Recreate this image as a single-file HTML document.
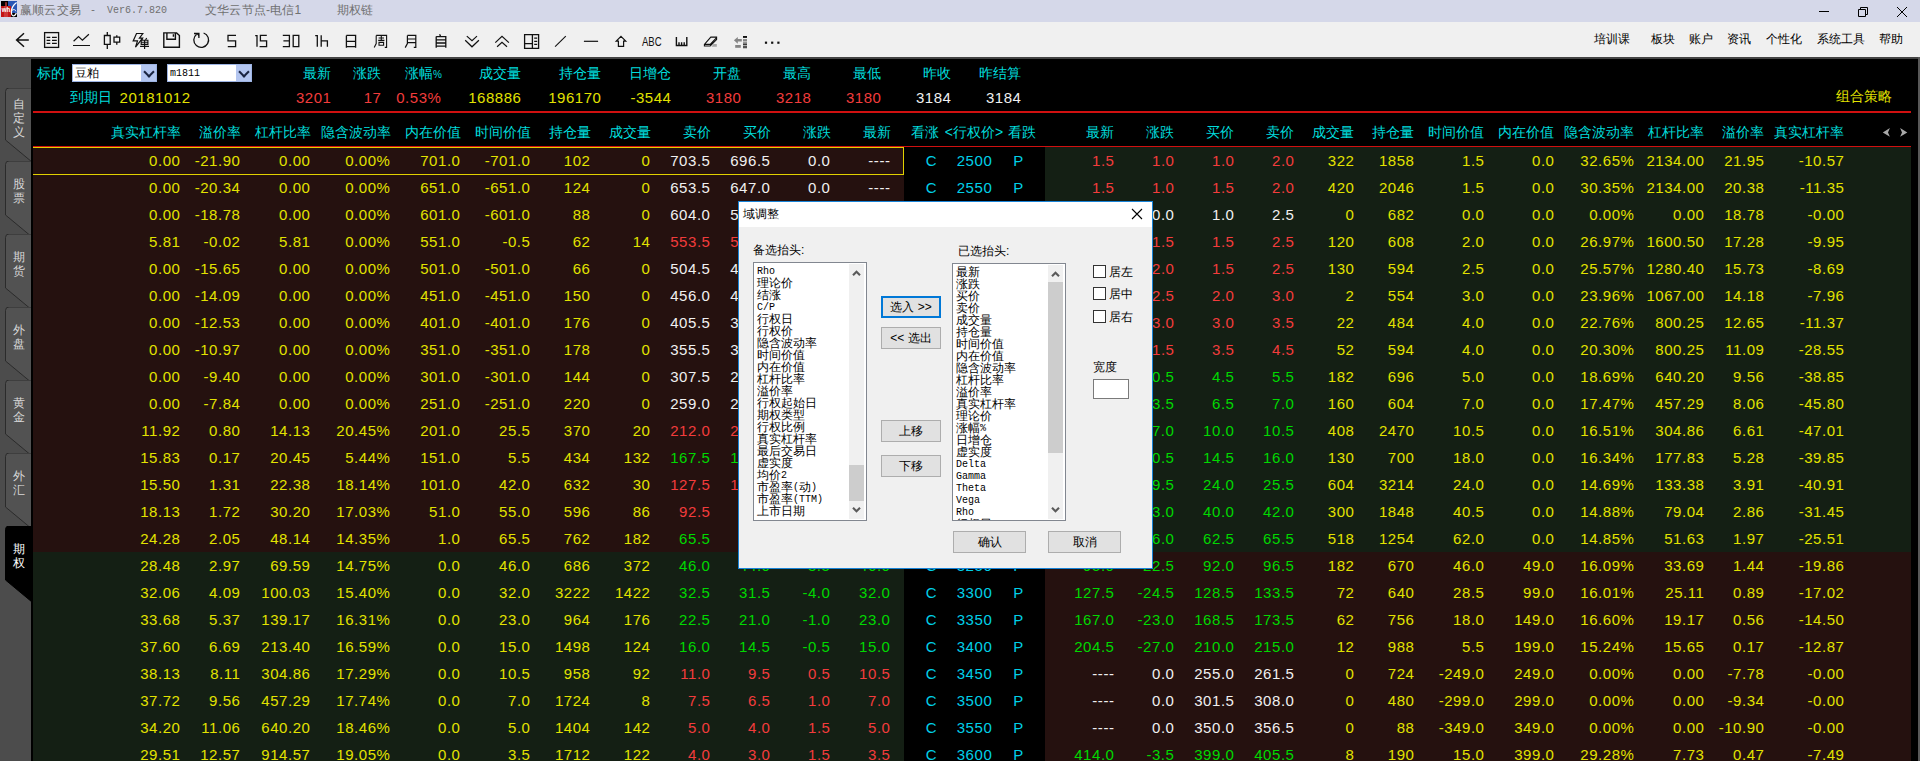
<!DOCTYPE html>
<html lang="zh">
<head>
<meta charset="utf-8">
<title>赢顺云交易</title>
<style>
*{box-sizing:border-box;margin:0;padding:0}
html,body{width:1920px;height:761px;overflow:hidden;background:#000}
body{position:relative;font-family:"Liberation Sans",sans-serif;font-size:12px;color:#000}
#titlebar{position:absolute;left:0;top:0;width:1920px;height:22px;background:#d5d8e9}
#titlebar .t{position:absolute;top:0;height:22px;line-height:20px;font-size:12px;color:#707070;white-space:nowrap;letter-spacing:0.2px}
#toolbar{position:absolute;left:0;top:22px;width:1920px;height:35px;background:#f0f0f0}
#tbline{position:absolute;left:0;top:57px;width:1920px;height:2px;background:#444}
#toolbar .mi{position:absolute;top:9px;height:16px;line-height:16px;font-size:12px;color:#000;white-space:nowrap}
#toolbar svg.ic{position:absolute;top:8px;width:24px;height:22px;overflow:visible}
#sidebar{position:absolute;left:0;top:59px;width:31px;height:702px;background:#4c4c4c;overflow:hidden}
#sidebar .tab{position:absolute;left:0}
#sidebar .tabt{position:absolute;left:6px;width:25px;display:flex;align-items:center;justify-content:center;text-align:center;font-size:12px;line-height:14px}
#main{position:absolute;left:0;top:0;width:1920px;height:761px;overflow:hidden}
.il,.iv,.h,.c{position:absolute;white-space:nowrap;text-align:right;overflow:visible}
.il{top:63px;height:20px;line-height:20px;font-size:14px;color:#00dcdc}
.iv{top:88px;height:20px;line-height:20px;font-size:15px;letter-spacing:0.55px;margin-left:0.5px}
.h{top:122px;height:20px;line-height:20px;font-size:14px;color:#00dcdc}
.il small{font-size:10px;letter-spacing:-1px}
.hc{text-align:center}
.row{position:absolute;left:0;width:1920px;height:27px}
.bg{position:absolute;top:0;height:27px}
.dr{background:#25110f}
.dg{background:#141f14}
.c{top:0;height:27px;line-height:27.7px;font-size:15px;letter-spacing:0.55px;margin-left:0.5px}
.c.m{text-align:center;color:#00d0e8}
.y{color:#e2e200}.r{color:#f23c3c}.g{color:#00d800}.w{color:#f0f0f0}
.hl{position:absolute;height:2px;background:#d01010}
#selbox{position:absolute;left:33px;top:147px;width:871px;height:28px;border:1px solid #e0d000;border-width:1px 1px 1px 0}
select,input{font-family:"Liberation Sans",sans-serif}
.combo{position:absolute;top:64px;width:85px;height:18px;background:#fff;border:1px solid #9db4e4;font-size:12px;line-height:16px;padding-left:2px;color:#000}
.combo i{position:absolute;right:0;top:0;width:15px;height:16px;background:#b4c6f0}
.combo i:after{content:"";position:absolute;left:4px;top:2.5px;width:6px;height:6px;border:solid #1a2440;border-width:0 2px 2px 0;transform:rotate(45deg)}
/* dialog */
#dlg{position:absolute;left:738px;top:201px;width:415px;height:368px;background:#f0f0f0;border:1px solid #1883d7}
#dlg .tt{position:absolute;left:0;top:0;width:413px;height:25px;background:#fff}
#dlg .tt span{position:absolute;left:4px;top:4px;font-size:12px;line-height:16px}
#dlg .lbl{position:absolute;font-size:12px;line-height:14px;white-space:nowrap}
#dlg .lb{position:absolute;background:#fff;border:1px solid #828790;overflow:hidden}
#dlg .lb .it{position:absolute;left:3px;top:2px;font-size:12px;line-height:12px;white-space:nowrap}
#dlg .it div{height:12px;line-height:12px;overflow:visible}
#dlg tt{font-family:'Liberation Mono',monospace;font-size:10px;line-height:10px;display:inline-block;height:10px;vertical-align:top;margin-top:2px}
#dlg .sb{position:absolute;right:2px;top:1px;width:15px;bottom:1px;background:#f0f0f0}
#dlg .sb b{position:absolute;left:0;width:15px;background:#cdcdcd}
#dlg .sb svg{position:absolute;left:3px;width:9px;height:6px}
#dlg .btn{position:absolute;height:22px;background:#e1e1e1;border:1px solid #adadad;font-size:12px;line-height:20px;text-align:center;white-space:nowrap}
#dlg .btn.def{border:2px solid #0078d7;line-height:18px}
#dlg .cb{position:absolute;width:13px;height:13px;background:#fff;border:1px solid #333}
</style>
</head>
<body>
<div id="titlebar">
<svg style="position:absolute;left:1px;top:1px" width="16" height="16" viewBox="0 0 16 16"><rect width="16" height="16" fill="#2856b4"/><rect x="0" y="0" width="7" height="5" fill="#000"/><rect x="4" y="1.2" width="2" height="3.8" fill="#8c2a2a"/><rect x="0" y="5" width="10" height="11" fill="#c41414"/><rect x="3" y="5" width="4" height="11" fill="#cc3838"/><rect x="10" y="12" width="6" height="4" fill="#000"/><path d="M15.6 1.4 C12.6 3.6 10.6 6.8 10.4 10.4 C10.3 13 10.9 14.6 12.2 14.8 C13.6 15 15 13.4 15.2 11.8" stroke="#fff" stroke-width="1.3" fill="none"/><path d="M11 9.4 C12.2 8 14.6 8.4 15 10.4" stroke="#fff" stroke-width="0.9" fill="none"/><text x="0.8" y="10.6" font-family="Liberation Sans" font-weight="bold" font-size="7.6" fill="#fff" textLength="8.6" lengthAdjust="spacingAndGlyphs">wh</text></svg>
<span class="t" style="left:20px">赢顺云交易</span><span class="t" style="left:90px;top:1px;font-family:'Liberation Mono',monospace;font-size:10px;letter-spacing:0">-</span><span class="t" style="left:107px;top:1px;font-family:'Liberation Mono',monospace;font-size:10px;letter-spacing:0">Ver6.7.820</span>
<span class="t" style="left:205px">文华云节点-电信1</span>
<span class="t" style="left:337px">期权链</span>
<svg style="position:absolute;left:1810px;top:0" width="110" height="22" viewBox="0 0 110 22"><g stroke="#000" stroke-width="1" fill="none"><path d="M9 11.5 H19"/><path d="M48.5 9.5 H55.5 V16.5 H48.5 Z M50.5 9.5 V7.5 H57.5 V14.5 H55.5"/><path d="M87 7 L97 17 M97 7 L87 17"/></g></svg>
</div>
<div id="toolbar">
<svg style="position:absolute;left:0;top:0" width="800" height="35" viewBox="0 22 800 35">
<g fill="none" stroke="#111" stroke-width="1.3" stroke-linecap="butt" stroke-linejoin="miter">
<!-- back -->
<path d="M24 33.2 L16.6 40 L24 46.8 M16.8 40 H28.8" stroke-width="1.5"/>
<!-- list -->
<rect x="44.6" y="32.6" width="14" height="14.8"/>
<path d="M46.6 37.3 H50.3 M52 37.3 H56.8 M46.6 40.3 H50.3 M52 40.3 H56.8 M46.6 43.3 H50.3 M52 43.3 H56.8" stroke-width="1.2"/>
<!-- line chart -->
<path d="M73.6 41.3 L78.5 36.6 L82.4 40.2 L88.9 34.2 M73 45.5 H90" stroke-width="1.2"/>
<!-- candles -->
<path d="M107.3 32 V35.5 M107.3 44.4 V49 M104.4 35.5 H110.2 V44.4 H104.4 Z M116.8 35.3 V37.2 M116.8 42.2 V44.8 M114 37.2 H119.7 V42.2 H114 Z"/>
<!-- flash + dan -->
<path d="M136.5 33.5 H142.8 L139.4 38.2 H142.6 L135.5 47.2 L137.5 40.9 H133.2 Z" stroke-width="1.2"/>
<path d="M141.6 38.6 L142.5 40 M146.7 38 L145.6 39.8 M141.2 40.2 H147.9 V44.4 H141.2 Z M141.2 42.2 H147.9 M144.6 40.2 V49 M140.1 46.4 H149" stroke-width="1.15"/>
<!-- floppy -->
<path d="M163.8 32.9 H176.6 L179.4 35.6 V47.2 H163.8 Z M166.9 32.9 V39.2 H175.4 V32.9 M173.4 34.2 V36.8" stroke-width="1.4"/>
<!-- refresh -->
<path d="M203.6 33 A7.4 7.4 0 1 1 196.6 34.2" stroke-width="1.3"/>
<path d="M194 33.5 H198.9 V38" stroke-width="1.3"/>
<path d="M196.2 33.5 H199 V36.4 Z" fill="#111" stroke="none"/>
<!-- 5 -->
<path d="M236 35.4 H228 V40.8 H235.6 V46.6 H227.8"/>
<!-- 15 -->
<path d="M255.2 35.6 H257 V46.8 M266.8 35.4 H260.4 V40.8 H266.6 V46.6 H259.6"/>
<!-- 30 -->
<path d="M282.8 35.4 H289.4 V46.6 H282.8 M283.4 40.8 H289.4 M293.2 35.4 H298.8 V46.6 H293.2 Z"/>
<!-- 1h -->
<path d="M315.2 35.6 H317.3 V46.8 M321.2 35.2 V46.8 M321.2 40.8 H327.4 V46.8"/>
<!-- ri -->
<path d="M346.4 35.4 H355.6 V47.8 M346.4 35.4 V47.8 M346.4 41.3 H355.6 M346.4 46.6 H355.6"/>
<!-- zhou -->
<path d="M376.2 35.4 H386.6 V47.4 H384.8 M376.2 35.4 V43.6 L374.2 47.6 M378.6 38 H384 M381.3 36 V40.4 M378.2 40.4 H384.4 M379 42.4 H383.6 V45.2 H379 Z" stroke-width="1.1"/>
<!-- yue -->
<path d="M407.4 35.4 H415.8 V47.4 H413.8 M407.4 35.4 V43.6 L405.2 47.6 M407.4 39 H415.8 M407.4 42.6 H415.8" stroke-width="1.2"/>
<!-- zi -->
<path d="M439.6 34.2 L440.6 36.4 M436.2 36.6 H445.8 V47.8 M436.2 36.6 V47.8 M436.2 39.8 H445.8 M436.2 43 H445.8 M436.2 46.2 H445.8"/>
<!-- chevrons down -->
<path d="M466.8 36.1 L472 40.6 L477 36.1 M465.2 40.2 L472 46.8 L478.9 40.2" stroke-width="1.2"/>
<!-- chevrons up -->
<path d="M495.3 42.6 L502 36.3 L508.9 42.6 M497.1 46.8 L502 42.4 L507 46.8" stroke-width="1.2"/>
<!-- layout -->
<path d="M524.6 34.6 H538.6 V48.4 H524.6 Z M532.4 34.6 V48.4 M524.6 43.6 H532.4 M534.2 38.2 H537.2 M534.2 41.3 H537.2 M534.2 44.4 H537.2"/>
<!-- diag -->
<path d="M555.1 46.6 L565.8 36.1" stroke-width="1.1"/>
<!-- hline -->
<path d="M583.9 41.3 H598.1" stroke-width="1.2"/>
<!-- up arrow -->
<path d="M621 36.3 L625.8 41.2 H623.6 V46.4 H618.4 V41.2 H616.2 Z" stroke-width="1.2"/>
<!-- ruler -->
<path d="M676.4 36.9 V45.5 H686.8 V36.9 M679 42.2 V45.5 M681.6 42.2 V45.5 M684.2 42.2 V45.5" stroke-width="1.4"/>
<!-- eraser -->
<path d="M710.8 37.1 H716.6 V39.6 L710.2 46 H704.4 V44.4 Z M704.4 44.4 H710.2 L716.6 37.6" stroke-width="1.1"/>
</g>
<path d="M711.5 46.8 L713.5 44 H716.8 V46.8 Z" fill="#a8a8a8"/>
<text x="642" y="45.9" font-family="Liberation Sans" font-size="12" fill="#111" textLength="19.6" lengthAdjust="spacingAndGlyphs">ABC</text>
<!-- indent -->
<g fill="#858585"><path d="M733.9 40.3 L737.8 36.9 V39 H741.8 V41.6 H737.8 V43.7 Z"/><rect x="735.2" y="45" width="5.6" height="2.8"/><rect x="743" y="39.1" width="4" height="2.4"/></g>
<g fill="#111"><rect x="743" y="36" width="4" height="1.9"/><rect x="743" y="42.6" width="4" height="0.9"/><rect x="743" y="44.2" width="4" height="0.9"/><rect x="743" y="45.8" width="4" height="0.9"/><rect x="743" y="47.3" width="4" height="0.9"/>
<rect x="764.9" y="41.6" width="2.2" height="2.2"/><rect x="771.1" y="41.6" width="2.2" height="2.2"/><rect x="777.3" y="41.6" width="2.2" height="2.2"/></g>
</svg>

<span class="mi" style="left:1594px">培训课</span>
<span class="mi" style="left:1651px">板块</span>
<span class="mi" style="left:1689px">账户</span>
<span class="mi" style="left:1727px">资讯</span>
<span class="mi" style="left:1766px">个性化</span>
<span class="mi" style="left:1817px">系统工具</span>
<span class="mi" style="left:1879px">帮助</span>
</div>
<div id="tbline"></div>
<div id="sidebar">
<svg class="tab" style="top:29px" width="31" height="75" viewBox="0 0 31 75"><path d="M32 0 H9 Q5.5 0 5.5 3.5 V52 L32 74 Z" fill="#525252" stroke="#2b2b2b" stroke-width="1"/></svg>
<div class="tabt" style="top:34px;height:50px;color:#d8d8d8"><span>自<br>定<br>义</span></div>
<svg class="tab" style="top:102px" width="31" height="77" viewBox="0 0 31 77"><path d="M32 0 H9 Q5.5 0 5.5 3.5 V54 L32 76 Z" fill="#525252" stroke="#2b2b2b" stroke-width="1"/></svg>
<div class="tabt" style="top:107px;height:50px;color:#d8d8d8"><span>股<br>票</span></div>
<svg class="tab" style="top:175px" width="31" height="77" viewBox="0 0 31 77"><path d="M32 0 H9 Q5.5 0 5.5 3.5 V54 L32 76 Z" fill="#525252" stroke="#2b2b2b" stroke-width="1"/></svg>
<div class="tabt" style="top:180px;height:50px;color:#d8d8d8"><span>期<br>货</span></div>
<svg class="tab" style="top:248px" width="31" height="77" viewBox="0 0 31 77"><path d="M32 0 H9 Q5.5 0 5.5 3.5 V54 L32 76 Z" fill="#525252" stroke="#2b2b2b" stroke-width="1"/></svg>
<div class="tabt" style="top:253px;height:50px;color:#d8d8d8"><span>外<br>盘</span></div>
<svg class="tab" style="top:321px" width="31" height="77" viewBox="0 0 31 77"><path d="M32 0 H9 Q5.5 0 5.5 3.5 V54 L32 76 Z" fill="#525252" stroke="#2b2b2b" stroke-width="1"/></svg>
<div class="tabt" style="top:326px;height:50px;color:#d8d8d8"><span>黄<br>金</span></div>
<svg class="tab" style="top:394px" width="31" height="77" viewBox="0 0 31 77"><path d="M32 0 H9 Q5.5 0 5.5 3.5 V54 L32 76 Z" fill="#525252" stroke="#2b2b2b" stroke-width="1"/></svg>
<div class="tabt" style="top:399px;height:50px;color:#d8d8d8"><span>外<br>汇</span></div>
<svg class="tab" style="top:467px" width="31" height="77" viewBox="0 0 31 77"><path d="M32 0 H9 Q5.5 0 5.5 3.5 V54 L32 76 Z" fill="#000" stroke="#000" stroke-width="1"/></svg>
<div class="tabt" style="top:472px;height:50px;color:#fff"><span>期<br>权</span></div>
</div>
<div id="main">
<span class="il" style="left:37px;width:28px;text-align:left">标的</span>
<div class="combo" style="left:72px">豆粕<i></i></div>
<div class="combo" style="left:167px;font-family:'Liberation Mono',monospace;font-size:10px;line-height:17px">m1811<i></i></div>
<span class="il" style="left:70px;top:87px;width:42px;text-align:left">到期日</span>
<span class="iv y" style="left:119px;width:72px;text-align:left;letter-spacing:0.55px">20181012</span>
<span class="il" style="left:231px;width:100px">最新</span>
<span class="il" style="left:281px;width:100px">涨跌</span>
<span class="il" style="left:341px;width:100px">涨幅<small>%</small></span>
<span class="il" style="left:421px;width:100px">成交量</span>
<span class="il" style="left:501px;width:100px">持仓量</span>
<span class="il" style="left:571px;width:100px">日增仓</span>
<span class="il" style="left:641px;width:100px">开盘</span>
<span class="il" style="left:711px;width:100px">最高</span>
<span class="il" style="left:781px;width:100px">最低</span>
<span class="il" style="left:851px;width:100px">昨收</span>
<span class="il" style="left:921px;width:100px">昨结算</span>
<span class="iv r" style="left:231px;width:100px">3201</span>
<span class="iv r" style="left:281px;width:100px">17</span>
<span class="iv r" style="left:341px;width:100px">0.53%</span>
<span class="iv y" style="left:421px;width:100px">168886</span>
<span class="iv y" style="left:501px;width:100px">196170</span>
<span class="iv y" style="left:571px;width:100px">-3544</span>
<span class="iv r" style="left:641px;width:100px">3180</span>
<span class="iv r" style="left:711px;width:100px">3218</span>
<span class="iv r" style="left:781px;width:100px">3180</span>
<span class="iv w" style="left:851px;width:100px">3184</span>
<span class="iv w" style="left:921px;width:100px">3184</span>
<span class="il y" style="left:1836px;top:86px;width:56px;color:#e2e200;text-align:left">组合策略</span>
<div class="hl" style="left:33px;top:111px;width:1878px"></div>
<span class="h" style="left:81px;width:100px">真实杠杆率</span>
<span class="h" style="left:141px;width:100px">溢价率</span>
<span class="h" style="left:211px;width:100px">杠杆比率</span>
<span class="h" style="left:291px;width:100px">隐含波动率</span>
<span class="h" style="left:361px;width:100px">内在价值</span>
<span class="h" style="left:431px;width:100px">时间价值</span>
<span class="h" style="left:491px;width:100px">持仓量</span>
<span class="h" style="left:551px;width:100px">成交量</span>
<span class="h" style="left:611px;width:100px">卖价</span>
<span class="h" style="left:671px;width:100px">买价</span>
<span class="h" style="left:731px;width:100px">涨跌</span>
<span class="h" style="left:791px;width:100px">最新</span>
<span class="h" style="left:1013.5px;width:100px">最新</span>
<span class="h" style="left:1073.5px;width:100px">涨跌</span>
<span class="h" style="left:1133.5px;width:100px">买价</span>
<span class="h" style="left:1193.5px;width:100px">卖价</span>
<span class="h" style="left:1253.5px;width:100px">成交量</span>
<span class="h" style="left:1313.5px;width:100px">持仓量</span>
<span class="h" style="left:1383.5px;width:100px">时间价值</span>
<span class="h" style="left:1453.5px;width:100px">内在价值</span>
<span class="h" style="left:1533.5px;width:100px">隐含波动率</span>
<span class="h" style="left:1603.5px;width:100px">杠杆比率</span>
<span class="h" style="left:1663.5px;width:100px">溢价率</span>
<span class="h" style="left:1743.5px;width:100px">真实杠杆率</span>
<span class="h hc" style="left:900px;width:50px">看涨</span>
<span class="h hc" style="left:941px;width:66px">&lt;行权价&gt;</span>
<span class="h hc" style="left:997px;width:50px">看跌</span>
<svg style="position:absolute;left:1880px;top:126px" width="30" height="13" viewBox="1880 126 30 13"><path d="M1882.8 132.4 L1889.9 128 L1888 132.4 L1889.9 136.8 Z M1907.3 132.4 L1900.1 128 L1902 132.4 L1900.1 136.8 Z" fill="#a8a8a8"/></svg>
<div class="hl" style="left:33px;top:146px;width:1878px;height:1px"></div>
<div class="row" style="top:147px"><div class="bg dr" style="left:33px;width:871px"></div><div class="bg dg" style="left:1045px;width:866px"></div><span class="c y" style="left:90px;width:90px">0.00</span><span class="c y" style="left:150px;width:90px">-21.90</span><span class="c y" style="left:220px;width:90px">0.00</span><span class="c y" style="left:300px;width:90px">0.00%</span><span class="c y" style="left:370px;width:90px">701.0</span><span class="c y" style="left:440px;width:90px">-701.0</span><span class="c y" style="left:500px;width:90px">102</span><span class="c y" style="left:560px;width:90px">0</span><span class="c w" style="left:620px;width:90px">703.5</span><span class="c w" style="left:680px;width:90px">696.5</span><span class="c w" style="left:740px;width:90px">0.0</span><span class="c w" style="left:800px;width:90px">----</span><span class="c m" style="left:911px;width:40px">C</span><span class="c m" style="left:944px;width:60px">2500</span><span class="c m" style="left:998px;width:40px">P</span><span class="c r" style="left:1024px;width:90px">1.5</span><span class="c r" style="left:1084px;width:90px">1.0</span><span class="c r" style="left:1144px;width:90px">1.0</span><span class="c r" style="left:1204px;width:90px">2.0</span><span class="c y" style="left:1264px;width:90px">322</span><span class="c y" style="left:1324px;width:90px">1858</span><span class="c y" style="left:1394px;width:90px">1.5</span><span class="c y" style="left:1464px;width:90px">0.0</span><span class="c y" style="left:1544px;width:90px">32.65%</span><span class="c y" style="left:1614px;width:90px">2134.00</span><span class="c y" style="left:1674px;width:90px">21.95</span><span class="c y" style="left:1754px;width:90px">-10.57</span></div>
<div class="row" style="top:174px"><div class="bg dr" style="left:33px;width:871px"></div><div class="bg dg" style="left:1045px;width:866px"></div><span class="c y" style="left:90px;width:90px">0.00</span><span class="c y" style="left:150px;width:90px">-20.34</span><span class="c y" style="left:220px;width:90px">0.00</span><span class="c y" style="left:300px;width:90px">0.00%</span><span class="c y" style="left:370px;width:90px">651.0</span><span class="c y" style="left:440px;width:90px">-651.0</span><span class="c y" style="left:500px;width:90px">124</span><span class="c y" style="left:560px;width:90px">0</span><span class="c w" style="left:620px;width:90px">653.5</span><span class="c w" style="left:680px;width:90px">647.0</span><span class="c w" style="left:740px;width:90px">0.0</span><span class="c w" style="left:800px;width:90px">----</span><span class="c m" style="left:911px;width:40px">C</span><span class="c m" style="left:944px;width:60px">2550</span><span class="c m" style="left:998px;width:40px">P</span><span class="c r" style="left:1024px;width:90px">1.5</span><span class="c r" style="left:1084px;width:90px">1.0</span><span class="c r" style="left:1144px;width:90px">1.5</span><span class="c r" style="left:1204px;width:90px">2.0</span><span class="c y" style="left:1264px;width:90px">420</span><span class="c y" style="left:1324px;width:90px">2046</span><span class="c y" style="left:1394px;width:90px">1.5</span><span class="c y" style="left:1464px;width:90px">0.0</span><span class="c y" style="left:1544px;width:90px">30.35%</span><span class="c y" style="left:1614px;width:90px">2134.00</span><span class="c y" style="left:1674px;width:90px">20.38</span><span class="c y" style="left:1754px;width:90px">-11.35</span></div>
<div class="row" style="top:201px"><div class="bg dr" style="left:33px;width:871px"></div><div class="bg dg" style="left:1045px;width:866px"></div><span class="c y" style="left:90px;width:90px">0.00</span><span class="c y" style="left:150px;width:90px">-18.78</span><span class="c y" style="left:220px;width:90px">0.00</span><span class="c y" style="left:300px;width:90px">0.00%</span><span class="c y" style="left:370px;width:90px">601.0</span><span class="c y" style="left:440px;width:90px">-601.0</span><span class="c y" style="left:500px;width:90px">88</span><span class="c y" style="left:560px;width:90px">0</span><span class="c w" style="left:620px;width:90px">604.0</span><span class="c w" style="left:680px;width:90px">597.5</span><span class="c w" style="left:740px;width:90px">0.0</span><span class="c w" style="left:800px;width:90px">----</span><span class="c m" style="left:911px;width:40px">C</span><span class="c m" style="left:944px;width:60px">2600</span><span class="c m" style="left:998px;width:40px">P</span><span class="c w" style="left:1024px;width:90px">----</span><span class="c w" style="left:1084px;width:90px">0.0</span><span class="c w" style="left:1144px;width:90px">1.0</span><span class="c w" style="left:1204px;width:90px">2.5</span><span class="c y" style="left:1264px;width:90px">0</span><span class="c y" style="left:1324px;width:90px">682</span><span class="c y" style="left:1394px;width:90px">0.0</span><span class="c y" style="left:1464px;width:90px">0.0</span><span class="c y" style="left:1544px;width:90px">0.00%</span><span class="c y" style="left:1614px;width:90px">0.00</span><span class="c y" style="left:1674px;width:90px">18.78</span><span class="c y" style="left:1754px;width:90px">-0.00</span></div>
<div class="row" style="top:228px"><div class="bg dr" style="left:33px;width:871px"></div><div class="bg dg" style="left:1045px;width:866px"></div><span class="c y" style="left:90px;width:90px">5.81</span><span class="c y" style="left:150px;width:90px">-0.02</span><span class="c y" style="left:220px;width:90px">5.81</span><span class="c y" style="left:300px;width:90px">0.00%</span><span class="c y" style="left:370px;width:90px">551.0</span><span class="c y" style="left:440px;width:90px">-0.5</span><span class="c y" style="left:500px;width:90px">62</span><span class="c y" style="left:560px;width:90px">14</span><span class="c r" style="left:620px;width:90px">553.5</span><span class="c r" style="left:680px;width:90px">547.0</span><span class="c r" style="left:740px;width:90px">2.5</span><span class="c r" style="left:800px;width:90px">550.5</span><span class="c m" style="left:911px;width:40px">C</span><span class="c m" style="left:944px;width:60px">2650</span><span class="c m" style="left:998px;width:40px">P</span><span class="c r" style="left:1024px;width:90px">2.0</span><span class="c r" style="left:1084px;width:90px">1.5</span><span class="c r" style="left:1144px;width:90px">1.5</span><span class="c r" style="left:1204px;width:90px">2.5</span><span class="c y" style="left:1264px;width:90px">120</span><span class="c y" style="left:1324px;width:90px">608</span><span class="c y" style="left:1394px;width:90px">2.0</span><span class="c y" style="left:1464px;width:90px">0.0</span><span class="c y" style="left:1544px;width:90px">26.97%</span><span class="c y" style="left:1614px;width:90px">1600.50</span><span class="c y" style="left:1674px;width:90px">17.28</span><span class="c y" style="left:1754px;width:90px">-9.95</span></div>
<div class="row" style="top:255px"><div class="bg dr" style="left:33px;width:871px"></div><div class="bg dg" style="left:1045px;width:866px"></div><span class="c y" style="left:90px;width:90px">0.00</span><span class="c y" style="left:150px;width:90px">-15.65</span><span class="c y" style="left:220px;width:90px">0.00</span><span class="c y" style="left:300px;width:90px">0.00%</span><span class="c y" style="left:370px;width:90px">501.0</span><span class="c y" style="left:440px;width:90px">-501.0</span><span class="c y" style="left:500px;width:90px">66</span><span class="c y" style="left:560px;width:90px">0</span><span class="c w" style="left:620px;width:90px">504.5</span><span class="c w" style="left:680px;width:90px">497.5</span><span class="c w" style="left:740px;width:90px">0.0</span><span class="c w" style="left:800px;width:90px">----</span><span class="c m" style="left:911px;width:40px">C</span><span class="c m" style="left:944px;width:60px">2700</span><span class="c m" style="left:998px;width:40px">P</span><span class="c r" style="left:1024px;width:90px">2.5</span><span class="c r" style="left:1084px;width:90px">2.0</span><span class="c r" style="left:1144px;width:90px">1.5</span><span class="c r" style="left:1204px;width:90px">2.5</span><span class="c y" style="left:1264px;width:90px">130</span><span class="c y" style="left:1324px;width:90px">594</span><span class="c y" style="left:1394px;width:90px">2.5</span><span class="c y" style="left:1464px;width:90px">0.0</span><span class="c y" style="left:1544px;width:90px">25.57%</span><span class="c y" style="left:1614px;width:90px">1280.40</span><span class="c y" style="left:1674px;width:90px">15.73</span><span class="c y" style="left:1754px;width:90px">-8.69</span></div>
<div class="row" style="top:282px"><div class="bg dr" style="left:33px;width:871px"></div><div class="bg dg" style="left:1045px;width:866px"></div><span class="c y" style="left:90px;width:90px">0.00</span><span class="c y" style="left:150px;width:90px">-14.09</span><span class="c y" style="left:220px;width:90px">0.00</span><span class="c y" style="left:300px;width:90px">0.00%</span><span class="c y" style="left:370px;width:90px">451.0</span><span class="c y" style="left:440px;width:90px">-451.0</span><span class="c y" style="left:500px;width:90px">150</span><span class="c y" style="left:560px;width:90px">0</span><span class="c w" style="left:620px;width:90px">456.0</span><span class="c w" style="left:680px;width:90px">448.0</span><span class="c w" style="left:740px;width:90px">0.0</span><span class="c w" style="left:800px;width:90px">----</span><span class="c m" style="left:911px;width:40px">C</span><span class="c m" style="left:944px;width:60px">2750</span><span class="c m" style="left:998px;width:40px">P</span><span class="c r" style="left:1024px;width:90px">3.0</span><span class="c r" style="left:1084px;width:90px">2.5</span><span class="c r" style="left:1144px;width:90px">2.0</span><span class="c r" style="left:1204px;width:90px">3.0</span><span class="c y" style="left:1264px;width:90px">2</span><span class="c y" style="left:1324px;width:90px">554</span><span class="c y" style="left:1394px;width:90px">3.0</span><span class="c y" style="left:1464px;width:90px">0.0</span><span class="c y" style="left:1544px;width:90px">23.96%</span><span class="c y" style="left:1614px;width:90px">1067.00</span><span class="c y" style="left:1674px;width:90px">14.18</span><span class="c y" style="left:1754px;width:90px">-7.96</span></div>
<div class="row" style="top:309px"><div class="bg dr" style="left:33px;width:871px"></div><div class="bg dg" style="left:1045px;width:866px"></div><span class="c y" style="left:90px;width:90px">0.00</span><span class="c y" style="left:150px;width:90px">-12.53</span><span class="c y" style="left:220px;width:90px">0.00</span><span class="c y" style="left:300px;width:90px">0.00%</span><span class="c y" style="left:370px;width:90px">401.0</span><span class="c y" style="left:440px;width:90px">-401.0</span><span class="c y" style="left:500px;width:90px">176</span><span class="c y" style="left:560px;width:90px">0</span><span class="c w" style="left:620px;width:90px">405.5</span><span class="c w" style="left:680px;width:90px">398.0</span><span class="c w" style="left:740px;width:90px">0.0</span><span class="c w" style="left:800px;width:90px">----</span><span class="c m" style="left:911px;width:40px">C</span><span class="c m" style="left:944px;width:60px">2800</span><span class="c m" style="left:998px;width:40px">P</span><span class="c r" style="left:1024px;width:90px">3.5</span><span class="c r" style="left:1084px;width:90px">3.0</span><span class="c r" style="left:1144px;width:90px">3.0</span><span class="c r" style="left:1204px;width:90px">3.5</span><span class="c y" style="left:1264px;width:90px">22</span><span class="c y" style="left:1324px;width:90px">484</span><span class="c y" style="left:1394px;width:90px">4.0</span><span class="c y" style="left:1464px;width:90px">0.0</span><span class="c y" style="left:1544px;width:90px">22.76%</span><span class="c y" style="left:1614px;width:90px">800.25</span><span class="c y" style="left:1674px;width:90px">12.65</span><span class="c y" style="left:1754px;width:90px">-11.37</span></div>
<div class="row" style="top:336px"><div class="bg dr" style="left:33px;width:871px"></div><div class="bg dg" style="left:1045px;width:866px"></div><span class="c y" style="left:90px;width:90px">0.00</span><span class="c y" style="left:150px;width:90px">-10.97</span><span class="c y" style="left:220px;width:90px">0.00</span><span class="c y" style="left:300px;width:90px">0.00%</span><span class="c y" style="left:370px;width:90px">351.0</span><span class="c y" style="left:440px;width:90px">-351.0</span><span class="c y" style="left:500px;width:90px">178</span><span class="c y" style="left:560px;width:90px">0</span><span class="c w" style="left:620px;width:90px">355.5</span><span class="c w" style="left:680px;width:90px">348.5</span><span class="c w" style="left:740px;width:90px">0.0</span><span class="c w" style="left:800px;width:90px">----</span><span class="c m" style="left:911px;width:40px">C</span><span class="c m" style="left:944px;width:60px">2850</span><span class="c m" style="left:998px;width:40px">P</span><span class="c r" style="left:1024px;width:90px">4.0</span><span class="c r" style="left:1084px;width:90px">1.5</span><span class="c r" style="left:1144px;width:90px">3.5</span><span class="c r" style="left:1204px;width:90px">4.5</span><span class="c y" style="left:1264px;width:90px">52</span><span class="c y" style="left:1324px;width:90px">594</span><span class="c y" style="left:1394px;width:90px">4.0</span><span class="c y" style="left:1464px;width:90px">0.0</span><span class="c y" style="left:1544px;width:90px">20.30%</span><span class="c y" style="left:1614px;width:90px">800.25</span><span class="c y" style="left:1674px;width:90px">11.09</span><span class="c y" style="left:1754px;width:90px">-28.55</span></div>
<div class="row" style="top:363px"><div class="bg dr" style="left:33px;width:871px"></div><div class="bg dg" style="left:1045px;width:866px"></div><span class="c y" style="left:90px;width:90px">0.00</span><span class="c y" style="left:150px;width:90px">-9.40</span><span class="c y" style="left:220px;width:90px">0.00</span><span class="c y" style="left:300px;width:90px">0.00%</span><span class="c y" style="left:370px;width:90px">301.0</span><span class="c y" style="left:440px;width:90px">-301.0</span><span class="c y" style="left:500px;width:90px">144</span><span class="c y" style="left:560px;width:90px">0</span><span class="c w" style="left:620px;width:90px">307.5</span><span class="c w" style="left:680px;width:90px">299.0</span><span class="c w" style="left:740px;width:90px">0.0</span><span class="c w" style="left:800px;width:90px">----</span><span class="c m" style="left:911px;width:40px">C</span><span class="c m" style="left:944px;width:60px">2900</span><span class="c m" style="left:998px;width:40px">P</span><span class="c g" style="left:1024px;width:90px">5.0</span><span class="c g" style="left:1084px;width:90px">-0.5</span><span class="c g" style="left:1144px;width:90px">4.5</span><span class="c g" style="left:1204px;width:90px">5.5</span><span class="c y" style="left:1264px;width:90px">182</span><span class="c y" style="left:1324px;width:90px">696</span><span class="c y" style="left:1394px;width:90px">5.0</span><span class="c y" style="left:1464px;width:90px">0.0</span><span class="c y" style="left:1544px;width:90px">18.69%</span><span class="c y" style="left:1614px;width:90px">640.20</span><span class="c y" style="left:1674px;width:90px">9.56</span><span class="c y" style="left:1754px;width:90px">-38.85</span></div>
<div class="row" style="top:390px"><div class="bg dr" style="left:33px;width:871px"></div><div class="bg dg" style="left:1045px;width:866px"></div><span class="c y" style="left:90px;width:90px">0.00</span><span class="c y" style="left:150px;width:90px">-7.84</span><span class="c y" style="left:220px;width:90px">0.00</span><span class="c y" style="left:300px;width:90px">0.00%</span><span class="c y" style="left:370px;width:90px">251.0</span><span class="c y" style="left:440px;width:90px">-251.0</span><span class="c y" style="left:500px;width:90px">220</span><span class="c y" style="left:560px;width:90px">0</span><span class="c w" style="left:620px;width:90px">259.0</span><span class="c w" style="left:680px;width:90px">249.5</span><span class="c w" style="left:740px;width:90px">0.0</span><span class="c w" style="left:800px;width:90px">----</span><span class="c m" style="left:911px;width:40px">C</span><span class="c m" style="left:944px;width:60px">2950</span><span class="c m" style="left:998px;width:40px">P</span><span class="c g" style="left:1024px;width:90px">7.0</span><span class="c g" style="left:1084px;width:90px">-3.5</span><span class="c g" style="left:1144px;width:90px">6.5</span><span class="c g" style="left:1204px;width:90px">7.0</span><span class="c y" style="left:1264px;width:90px">160</span><span class="c y" style="left:1324px;width:90px">604</span><span class="c y" style="left:1394px;width:90px">7.0</span><span class="c y" style="left:1464px;width:90px">0.0</span><span class="c y" style="left:1544px;width:90px">17.47%</span><span class="c y" style="left:1614px;width:90px">457.29</span><span class="c y" style="left:1674px;width:90px">8.06</span><span class="c y" style="left:1754px;width:90px">-45.80</span></div>
<div class="row" style="top:417px"><div class="bg dr" style="left:33px;width:871px"></div><div class="bg dg" style="left:1045px;width:866px"></div><span class="c y" style="left:90px;width:90px">11.92</span><span class="c y" style="left:150px;width:90px">0.80</span><span class="c y" style="left:220px;width:90px">14.13</span><span class="c y" style="left:300px;width:90px">20.45%</span><span class="c y" style="left:370px;width:90px">201.0</span><span class="c y" style="left:440px;width:90px">25.5</span><span class="c y" style="left:500px;width:90px">370</span><span class="c y" style="left:560px;width:90px">20</span><span class="c r" style="left:620px;width:90px">212.0</span><span class="c r" style="left:680px;width:90px">205.0</span><span class="c r" style="left:740px;width:90px">3.5</span><span class="c r" style="left:800px;width:90px">226.5</span><span class="c m" style="left:911px;width:40px">C</span><span class="c m" style="left:944px;width:60px">3000</span><span class="c m" style="left:998px;width:40px">P</span><span class="c g" style="left:1024px;width:90px">10.5</span><span class="c g" style="left:1084px;width:90px">-7.0</span><span class="c g" style="left:1144px;width:90px">10.0</span><span class="c g" style="left:1204px;width:90px">10.5</span><span class="c y" style="left:1264px;width:90px">408</span><span class="c y" style="left:1324px;width:90px">2470</span><span class="c y" style="left:1394px;width:90px">10.5</span><span class="c y" style="left:1464px;width:90px">0.0</span><span class="c y" style="left:1544px;width:90px">16.51%</span><span class="c y" style="left:1614px;width:90px">304.86</span><span class="c y" style="left:1674px;width:90px">6.61</span><span class="c y" style="left:1754px;width:90px">-47.01</span></div>
<div class="row" style="top:444px"><div class="bg dr" style="left:33px;width:871px"></div><div class="bg dg" style="left:1045px;width:866px"></div><span class="c y" style="left:90px;width:90px">15.83</span><span class="c y" style="left:150px;width:90px">0.17</span><span class="c y" style="left:220px;width:90px">20.45</span><span class="c y" style="left:300px;width:90px">5.44%</span><span class="c y" style="left:370px;width:90px">151.0</span><span class="c y" style="left:440px;width:90px">5.5</span><span class="c y" style="left:500px;width:90px">434</span><span class="c y" style="left:560px;width:90px">132</span><span class="c g" style="left:620px;width:90px">167.5</span><span class="c g" style="left:680px;width:90px">155.0</span><span class="c g" style="left:740px;width:90px">-1.5</span><span class="c g" style="left:800px;width:90px">156.5</span><span class="c m" style="left:911px;width:40px">C</span><span class="c m" style="left:944px;width:60px">3050</span><span class="c m" style="left:998px;width:40px">P</span><span class="c g" style="left:1024px;width:90px">16.0</span><span class="c g" style="left:1084px;width:90px">-10.5</span><span class="c g" style="left:1144px;width:90px">14.5</span><span class="c g" style="left:1204px;width:90px">16.0</span><span class="c y" style="left:1264px;width:90px">130</span><span class="c y" style="left:1324px;width:90px">700</span><span class="c y" style="left:1394px;width:90px">18.0</span><span class="c y" style="left:1464px;width:90px">0.0</span><span class="c y" style="left:1544px;width:90px">16.34%</span><span class="c y" style="left:1614px;width:90px">177.83</span><span class="c y" style="left:1674px;width:90px">5.28</span><span class="c y" style="left:1754px;width:90px">-39.85</span></div>
<div class="row" style="top:471px"><div class="bg dr" style="left:33px;width:871px"></div><div class="bg dg" style="left:1045px;width:866px"></div><span class="c y" style="left:90px;width:90px">15.50</span><span class="c y" style="left:150px;width:90px">1.31</span><span class="c y" style="left:220px;width:90px">22.38</span><span class="c y" style="left:300px;width:90px">18.14%</span><span class="c y" style="left:370px;width:90px">101.0</span><span class="c y" style="left:440px;width:90px">42.0</span><span class="c y" style="left:500px;width:90px">632</span><span class="c y" style="left:560px;width:90px">30</span><span class="c r" style="left:620px;width:90px">127.5</span><span class="c r" style="left:680px;width:90px">122.0</span><span class="c r" style="left:740px;width:90px">2.0</span><span class="c r" style="left:800px;width:90px">143.0</span><span class="c m" style="left:911px;width:40px">C</span><span class="c m" style="left:944px;width:60px">3100</span><span class="c m" style="left:998px;width:40px">P</span><span class="c g" style="left:1024px;width:90px">24.0</span><span class="c g" style="left:1084px;width:90px">-19.5</span><span class="c g" style="left:1144px;width:90px">24.0</span><span class="c g" style="left:1204px;width:90px">25.5</span><span class="c y" style="left:1264px;width:90px">604</span><span class="c y" style="left:1324px;width:90px">3214</span><span class="c y" style="left:1394px;width:90px">24.0</span><span class="c y" style="left:1464px;width:90px">0.0</span><span class="c y" style="left:1544px;width:90px">14.69%</span><span class="c y" style="left:1614px;width:90px">133.38</span><span class="c y" style="left:1674px;width:90px">3.91</span><span class="c y" style="left:1754px;width:90px">-40.91</span></div>
<div class="row" style="top:498px"><div class="bg dr" style="left:33px;width:871px"></div><div class="bg dg" style="left:1045px;width:866px"></div><span class="c y" style="left:90px;width:90px">18.13</span><span class="c y" style="left:150px;width:90px">1.72</span><span class="c y" style="left:220px;width:90px">30.20</span><span class="c y" style="left:300px;width:90px">17.03%</span><span class="c y" style="left:370px;width:90px">51.0</span><span class="c y" style="left:440px;width:90px">55.0</span><span class="c y" style="left:500px;width:90px">596</span><span class="c y" style="left:560px;width:90px">86</span><span class="c r" style="left:620px;width:90px">92.5</span><span class="c r" style="left:680px;width:90px">90.5</span><span class="c r" style="left:740px;width:90px">1.0</span><span class="c r" style="left:800px;width:90px">106.0</span><span class="c m" style="left:911px;width:40px">C</span><span class="c m" style="left:944px;width:60px">3150</span><span class="c m" style="left:998px;width:40px">P</span><span class="c g" style="left:1024px;width:90px">40.5</span><span class="c g" style="left:1084px;width:90px">-23.0</span><span class="c g" style="left:1144px;width:90px">40.0</span><span class="c g" style="left:1204px;width:90px">42.0</span><span class="c y" style="left:1264px;width:90px">300</span><span class="c y" style="left:1324px;width:90px">1848</span><span class="c y" style="left:1394px;width:90px">40.5</span><span class="c y" style="left:1464px;width:90px">0.0</span><span class="c y" style="left:1544px;width:90px">14.88%</span><span class="c y" style="left:1614px;width:90px">79.04</span><span class="c y" style="left:1674px;width:90px">2.86</span><span class="c y" style="left:1754px;width:90px">-31.45</span></div>
<div class="row" style="top:525px"><div class="bg dr" style="left:33px;width:871px"></div><div class="bg dg" style="left:1045px;width:866px"></div><span class="c y" style="left:90px;width:90px">24.28</span><span class="c y" style="left:150px;width:90px">2.05</span><span class="c y" style="left:220px;width:90px">48.14</span><span class="c y" style="left:300px;width:90px">14.35%</span><span class="c y" style="left:370px;width:90px">1.0</span><span class="c y" style="left:440px;width:90px">65.5</span><span class="c y" style="left:500px;width:90px">762</span><span class="c y" style="left:560px;width:90px">182</span><span class="c g" style="left:620px;width:90px">65.5</span><span class="c g" style="left:680px;width:90px">64.0</span><span class="c g" style="left:740px;width:90px">-3.5</span><span class="c g" style="left:800px;width:90px">66.5</span><span class="c m" style="left:911px;width:40px">C</span><span class="c m" style="left:944px;width:60px">3200</span><span class="c m" style="left:998px;width:40px">P</span><span class="c g" style="left:1024px;width:90px">62.0</span><span class="c g" style="left:1084px;width:90px">-26.0</span><span class="c g" style="left:1144px;width:90px">62.5</span><span class="c g" style="left:1204px;width:90px">65.5</span><span class="c y" style="left:1264px;width:90px">518</span><span class="c y" style="left:1324px;width:90px">1254</span><span class="c y" style="left:1394px;width:90px">62.0</span><span class="c y" style="left:1464px;width:90px">0.0</span><span class="c y" style="left:1544px;width:90px">14.85%</span><span class="c y" style="left:1614px;width:90px">51.63</span><span class="c y" style="left:1674px;width:90px">1.97</span><span class="c y" style="left:1754px;width:90px">-25.51</span></div>
<div class="row" style="top:552px"><div class="bg dg" style="left:33px;width:871px"></div><div class="bg dr" style="left:1045px;width:866px"></div><span class="c y" style="left:90px;width:90px">28.48</span><span class="c y" style="left:150px;width:90px">2.97</span><span class="c y" style="left:220px;width:90px">69.59</span><span class="c y" style="left:300px;width:90px">14.75%</span><span class="c y" style="left:370px;width:90px">0.0</span><span class="c y" style="left:440px;width:90px">46.0</span><span class="c y" style="left:500px;width:90px">686</span><span class="c y" style="left:560px;width:90px">372</span><span class="c g" style="left:620px;width:90px">46.0</span><span class="c g" style="left:680px;width:90px">44.0</span><span class="c g" style="left:740px;width:90px">-3.5</span><span class="c g" style="left:800px;width:90px">46.0</span><span class="c m" style="left:911px;width:40px">C</span><span class="c m" style="left:944px;width:60px">3250</span><span class="c m" style="left:998px;width:40px">P</span><span class="c g" style="left:1024px;width:90px">95.0</span><span class="c g" style="left:1084px;width:90px">-22.5</span><span class="c g" style="left:1144px;width:90px">92.0</span><span class="c g" style="left:1204px;width:90px">96.5</span><span class="c y" style="left:1264px;width:90px">182</span><span class="c y" style="left:1324px;width:90px">670</span><span class="c y" style="left:1394px;width:90px">46.0</span><span class="c y" style="left:1464px;width:90px">49.0</span><span class="c y" style="left:1544px;width:90px">16.09%</span><span class="c y" style="left:1614px;width:90px">33.69</span><span class="c y" style="left:1674px;width:90px">1.44</span><span class="c y" style="left:1754px;width:90px">-19.86</span></div>
<div class="row" style="top:579px"><div class="bg dg" style="left:33px;width:871px"></div><div class="bg dr" style="left:1045px;width:866px"></div><span class="c y" style="left:90px;width:90px">32.06</span><span class="c y" style="left:150px;width:90px">4.09</span><span class="c y" style="left:220px;width:90px">100.03</span><span class="c y" style="left:300px;width:90px">15.40%</span><span class="c y" style="left:370px;width:90px">0.0</span><span class="c y" style="left:440px;width:90px">32.0</span><span class="c y" style="left:500px;width:90px">3222</span><span class="c y" style="left:560px;width:90px">1422</span><span class="c g" style="left:620px;width:90px">32.5</span><span class="c g" style="left:680px;width:90px">31.5</span><span class="c g" style="left:740px;width:90px">-4.0</span><span class="c g" style="left:800px;width:90px">32.0</span><span class="c m" style="left:911px;width:40px">C</span><span class="c m" style="left:944px;width:60px">3300</span><span class="c m" style="left:998px;width:40px">P</span><span class="c g" style="left:1024px;width:90px">127.5</span><span class="c g" style="left:1084px;width:90px">-24.5</span><span class="c g" style="left:1144px;width:90px">128.5</span><span class="c g" style="left:1204px;width:90px">133.5</span><span class="c y" style="left:1264px;width:90px">72</span><span class="c y" style="left:1324px;width:90px">640</span><span class="c y" style="left:1394px;width:90px">28.5</span><span class="c y" style="left:1464px;width:90px">99.0</span><span class="c y" style="left:1544px;width:90px">16.01%</span><span class="c y" style="left:1614px;width:90px">25.11</span><span class="c y" style="left:1674px;width:90px">0.89</span><span class="c y" style="left:1754px;width:90px">-17.02</span></div>
<div class="row" style="top:606px"><div class="bg dg" style="left:33px;width:871px"></div><div class="bg dr" style="left:1045px;width:866px"></div><span class="c y" style="left:90px;width:90px">33.68</span><span class="c y" style="left:150px;width:90px">5.37</span><span class="c y" style="left:220px;width:90px">139.17</span><span class="c y" style="left:300px;width:90px">16.31%</span><span class="c y" style="left:370px;width:90px">0.0</span><span class="c y" style="left:440px;width:90px">23.0</span><span class="c y" style="left:500px;width:90px">964</span><span class="c y" style="left:560px;width:90px">176</span><span class="c g" style="left:620px;width:90px">22.5</span><span class="c g" style="left:680px;width:90px">21.0</span><span class="c g" style="left:740px;width:90px">-1.0</span><span class="c g" style="left:800px;width:90px">23.0</span><span class="c m" style="left:911px;width:40px">C</span><span class="c m" style="left:944px;width:60px">3350</span><span class="c m" style="left:998px;width:40px">P</span><span class="c g" style="left:1024px;width:90px">167.0</span><span class="c g" style="left:1084px;width:90px">-23.0</span><span class="c g" style="left:1144px;width:90px">168.5</span><span class="c g" style="left:1204px;width:90px">173.5</span><span class="c y" style="left:1264px;width:90px">62</span><span class="c y" style="left:1324px;width:90px">756</span><span class="c y" style="left:1394px;width:90px">18.0</span><span class="c y" style="left:1464px;width:90px">149.0</span><span class="c y" style="left:1544px;width:90px">16.60%</span><span class="c y" style="left:1614px;width:90px">19.17</span><span class="c y" style="left:1674px;width:90px">0.56</span><span class="c y" style="left:1754px;width:90px">-14.50</span></div>
<div class="row" style="top:633px"><div class="bg dg" style="left:33px;width:871px"></div><div class="bg dr" style="left:1045px;width:866px"></div><span class="c y" style="left:90px;width:90px">37.60</span><span class="c y" style="left:150px;width:90px">6.69</span><span class="c y" style="left:220px;width:90px">213.40</span><span class="c y" style="left:300px;width:90px">16.59%</span><span class="c y" style="left:370px;width:90px">0.0</span><span class="c y" style="left:440px;width:90px">15.0</span><span class="c y" style="left:500px;width:90px">1498</span><span class="c y" style="left:560px;width:90px">124</span><span class="c g" style="left:620px;width:90px">16.0</span><span class="c g" style="left:680px;width:90px">14.5</span><span class="c g" style="left:740px;width:90px">-0.5</span><span class="c g" style="left:800px;width:90px">15.0</span><span class="c m" style="left:911px;width:40px">C</span><span class="c m" style="left:944px;width:60px">3400</span><span class="c m" style="left:998px;width:40px">P</span><span class="c g" style="left:1024px;width:90px">204.5</span><span class="c g" style="left:1084px;width:90px">-27.0</span><span class="c g" style="left:1144px;width:90px">210.0</span><span class="c g" style="left:1204px;width:90px">215.0</span><span class="c y" style="left:1264px;width:90px">12</span><span class="c y" style="left:1324px;width:90px">988</span><span class="c y" style="left:1394px;width:90px">5.5</span><span class="c y" style="left:1464px;width:90px">199.0</span><span class="c y" style="left:1544px;width:90px">15.24%</span><span class="c y" style="left:1614px;width:90px">15.65</span><span class="c y" style="left:1674px;width:90px">0.17</span><span class="c y" style="left:1754px;width:90px">-12.87</span></div>
<div class="row" style="top:660px"><div class="bg dg" style="left:33px;width:871px"></div><div class="bg dr" style="left:1045px;width:866px"></div><span class="c y" style="left:90px;width:90px">38.13</span><span class="c y" style="left:150px;width:90px">8.11</span><span class="c y" style="left:220px;width:90px">304.86</span><span class="c y" style="left:300px;width:90px">17.29%</span><span class="c y" style="left:370px;width:90px">0.0</span><span class="c y" style="left:440px;width:90px">10.5</span><span class="c y" style="left:500px;width:90px">958</span><span class="c y" style="left:560px;width:90px">92</span><span class="c r" style="left:620px;width:90px">11.0</span><span class="c r" style="left:680px;width:90px">9.5</span><span class="c r" style="left:740px;width:90px">0.5</span><span class="c r" style="left:800px;width:90px">10.5</span><span class="c m" style="left:911px;width:40px">C</span><span class="c m" style="left:944px;width:60px">3450</span><span class="c m" style="left:998px;width:40px">P</span><span class="c w" style="left:1024px;width:90px">----</span><span class="c w" style="left:1084px;width:90px">0.0</span><span class="c w" style="left:1144px;width:90px">255.0</span><span class="c w" style="left:1204px;width:90px">261.5</span><span class="c y" style="left:1264px;width:90px">0</span><span class="c y" style="left:1324px;width:90px">724</span><span class="c y" style="left:1394px;width:90px">-249.0</span><span class="c y" style="left:1464px;width:90px">249.0</span><span class="c y" style="left:1544px;width:90px">0.00%</span><span class="c y" style="left:1614px;width:90px">0.00</span><span class="c y" style="left:1674px;width:90px">-7.78</span><span class="c y" style="left:1754px;width:90px">-0.00</span></div>
<div class="row" style="top:687px"><div class="bg dg" style="left:33px;width:871px"></div><div class="bg dr" style="left:1045px;width:866px"></div><span class="c y" style="left:90px;width:90px">37.72</span><span class="c y" style="left:150px;width:90px">9.56</span><span class="c y" style="left:220px;width:90px">457.29</span><span class="c y" style="left:300px;width:90px">17.74%</span><span class="c y" style="left:370px;width:90px">0.0</span><span class="c y" style="left:440px;width:90px">7.0</span><span class="c y" style="left:500px;width:90px">1724</span><span class="c y" style="left:560px;width:90px">8</span><span class="c r" style="left:620px;width:90px">7.5</span><span class="c r" style="left:680px;width:90px">6.5</span><span class="c r" style="left:740px;width:90px">1.0</span><span class="c r" style="left:800px;width:90px">7.0</span><span class="c m" style="left:911px;width:40px">C</span><span class="c m" style="left:944px;width:60px">3500</span><span class="c m" style="left:998px;width:40px">P</span><span class="c w" style="left:1024px;width:90px">----</span><span class="c w" style="left:1084px;width:90px">0.0</span><span class="c w" style="left:1144px;width:90px">301.5</span><span class="c w" style="left:1204px;width:90px">308.0</span><span class="c y" style="left:1264px;width:90px">0</span><span class="c y" style="left:1324px;width:90px">480</span><span class="c y" style="left:1394px;width:90px">-299.0</span><span class="c y" style="left:1464px;width:90px">299.0</span><span class="c y" style="left:1544px;width:90px">0.00%</span><span class="c y" style="left:1614px;width:90px">0.00</span><span class="c y" style="left:1674px;width:90px">-9.34</span><span class="c y" style="left:1754px;width:90px">-0.00</span></div>
<div class="row" style="top:714px"><div class="bg dg" style="left:33px;width:871px"></div><div class="bg dr" style="left:1045px;width:866px"></div><span class="c y" style="left:90px;width:90px">34.20</span><span class="c y" style="left:150px;width:90px">11.06</span><span class="c y" style="left:220px;width:90px">640.20</span><span class="c y" style="left:300px;width:90px">18.46%</span><span class="c y" style="left:370px;width:90px">0.0</span><span class="c y" style="left:440px;width:90px">5.0</span><span class="c y" style="left:500px;width:90px">1404</span><span class="c y" style="left:560px;width:90px">142</span><span class="c r" style="left:620px;width:90px">5.0</span><span class="c r" style="left:680px;width:90px">4.0</span><span class="c r" style="left:740px;width:90px">1.5</span><span class="c r" style="left:800px;width:90px">5.0</span><span class="c m" style="left:911px;width:40px">C</span><span class="c m" style="left:944px;width:60px">3550</span><span class="c m" style="left:998px;width:40px">P</span><span class="c w" style="left:1024px;width:90px">----</span><span class="c w" style="left:1084px;width:90px">0.0</span><span class="c w" style="left:1144px;width:90px">350.0</span><span class="c w" style="left:1204px;width:90px">356.5</span><span class="c y" style="left:1264px;width:90px">0</span><span class="c y" style="left:1324px;width:90px">88</span><span class="c y" style="left:1394px;width:90px">-349.0</span><span class="c y" style="left:1464px;width:90px">349.0</span><span class="c y" style="left:1544px;width:90px">0.00%</span><span class="c y" style="left:1614px;width:90px">0.00</span><span class="c y" style="left:1674px;width:90px">-10.90</span><span class="c y" style="left:1754px;width:90px">-0.00</span></div>
<div class="row" style="top:741px"><div class="bg dg" style="left:33px;width:871px"></div><div class="bg dr" style="left:1045px;width:866px"></div><span class="c y" style="left:90px;width:90px">29.51</span><span class="c y" style="left:150px;width:90px">12.57</span><span class="c y" style="left:220px;width:90px">914.57</span><span class="c y" style="left:300px;width:90px">19.05%</span><span class="c y" style="left:370px;width:90px">0.0</span><span class="c y" style="left:440px;width:90px">3.5</span><span class="c y" style="left:500px;width:90px">1712</span><span class="c y" style="left:560px;width:90px">122</span><span class="c r" style="left:620px;width:90px">4.0</span><span class="c r" style="left:680px;width:90px">3.0</span><span class="c r" style="left:740px;width:90px">1.5</span><span class="c r" style="left:800px;width:90px">3.5</span><span class="c m" style="left:911px;width:40px">C</span><span class="c m" style="left:944px;width:60px">3600</span><span class="c m" style="left:998px;width:40px">P</span><span class="c g" style="left:1024px;width:90px">414.0</span><span class="c g" style="left:1084px;width:90px">-3.5</span><span class="c g" style="left:1144px;width:90px">399.0</span><span class="c g" style="left:1204px;width:90px">405.5</span><span class="c y" style="left:1264px;width:90px">8</span><span class="c y" style="left:1324px;width:90px">190</span><span class="c y" style="left:1394px;width:90px">15.0</span><span class="c y" style="left:1464px;width:90px">399.0</span><span class="c y" style="left:1544px;width:90px">29.28%</span><span class="c y" style="left:1614px;width:90px">7.73</span><span class="c y" style="left:1674px;width:90px">0.47</span><span class="c y" style="left:1754px;width:90px">-7.49</span></div>
<div id="selbox"></div>
<div style="position:absolute;left:1911px;top:59px;width:7px;height:702px;background:#000"></div><div style="position:absolute;left:1918px;top:57px;width:2px;height:704px;background:#585858"></div>
</div>
<div id="dlg">
<div class="tt"><span>域调整</span>
<svg style="position:absolute;left:392px;top:6px" width="12" height="12" viewBox="0 0 12 12"><path d="M1 1 L11 11 M11 1 L1 11" stroke="#000" stroke-width="1.1" fill="none"/></svg></div>
<span class="lbl" style="left:14px;top:41px">备选抬头:</span>
<span class="lbl" style="left:219px;top:42px">已选抬头:</span>
<div class="lb" style="left:14px;top:60px;width:114px;height:259px">
<div class="it"><div><tt>Rho</tt></div><div>理论价</div><div>结涨</div><div><tt>C/P</tt></div><div>行权日</div><div>行权价</div><div>隐含波动率</div><div>时间价值</div><div>内在价值</div><div>杠杆比率</div><div>溢价率</div><div>行权起始日</div><div>期权类型</div><div>行权比例</div><div>真实杠杆率</div><div>最后交易日</div><div>虚实度</div><div>均价<tt>2</tt></div><div>市盈率<tt>(</tt>动<tt>)</tt></div><div>市盈率<tt>(TTM)</tt></div><div>上市日期</div></div>
<div class="sb"><svg style="top:6px" viewBox="0 0 9 6"><path d="M1 5.2 L4.5 1.7 L8 5.2" stroke="#5a5a5a" stroke-width="2.1" fill="none"/></svg><b style="top:201px;height:36px"></b><svg style="bottom:6px" viewBox="0 0 9 6"><path d="M1 0.8 L4.5 4.3 L8 0.8" stroke="#5a5a5a" stroke-width="2.1" fill="none"/></svg></div>
</div>
<div class="lb" style="left:213px;top:61px;width:114px;height:258px">
<div class="it"><div>最新</div><div>涨跌</div><div>买价</div><div>卖价</div><div>成交量</div><div>持仓量</div><div>时间价值</div><div>内在价值</div><div>隐含波动率</div><div>杠杆比率</div><div>溢价率</div><div>真实杠杆率</div><div>理论价</div><div>涨幅<tt>%</tt></div><div>日增仓</div><div>虚实度</div><div><tt>Delta</tt></div><div><tt>Gamma</tt></div><div><tt>Theta</tt></div><div><tt>Vega</tt></div><div><tt>Rho</tt></div><div>行权日</div></div>
<div class="sb"><svg style="top:6px" viewBox="0 0 9 6"><path d="M1 5.2 L4.5 1.7 L8 5.2" stroke="#5a5a5a" stroke-width="2.1" fill="none"/></svg><b style="top:17px;height:171px"></b><svg style="bottom:6px" viewBox="0 0 9 6"><path d="M1 0.8 L4.5 4.3 L8 0.8" stroke="#5a5a5a" stroke-width="2.1" fill="none"/></svg></div>
</div>
<div class="btn def" style="left:142px;top:94px;width:60px">选入 &gt;&gt;</div>
<div class="btn" style="left:142px;top:125px;width:60px">&lt;&lt; 选出</div>
<div class="btn" style="left:142px;top:218px;width:60px">上移</div>
<div class="btn" style="left:142px;top:253px;width:60px">下移</div>
<div class="btn" style="left:214px;top:329px;width:73px">确认</div>
<div class="btn" style="left:309px;top:329px;width:73px">取消</div>
<div class="cb" style="left:354px;top:63px"></div><span class="lbl" style="left:370px;top:63px">居左</span>
<div class="cb" style="left:354px;top:85px"></div><span class="lbl" style="left:370px;top:85px">居中</span>
<div class="cb" style="left:354px;top:108px"></div><span class="lbl" style="left:370px;top:108px">居右</span>
<span class="lbl" style="left:354px;top:158px">宽度</span>
<div style="position:absolute;left:354px;top:177px;width:36px;height:20px;background:#fff;border:1px solid #7a7a7a"></div>
</div>

</body>
</html>
